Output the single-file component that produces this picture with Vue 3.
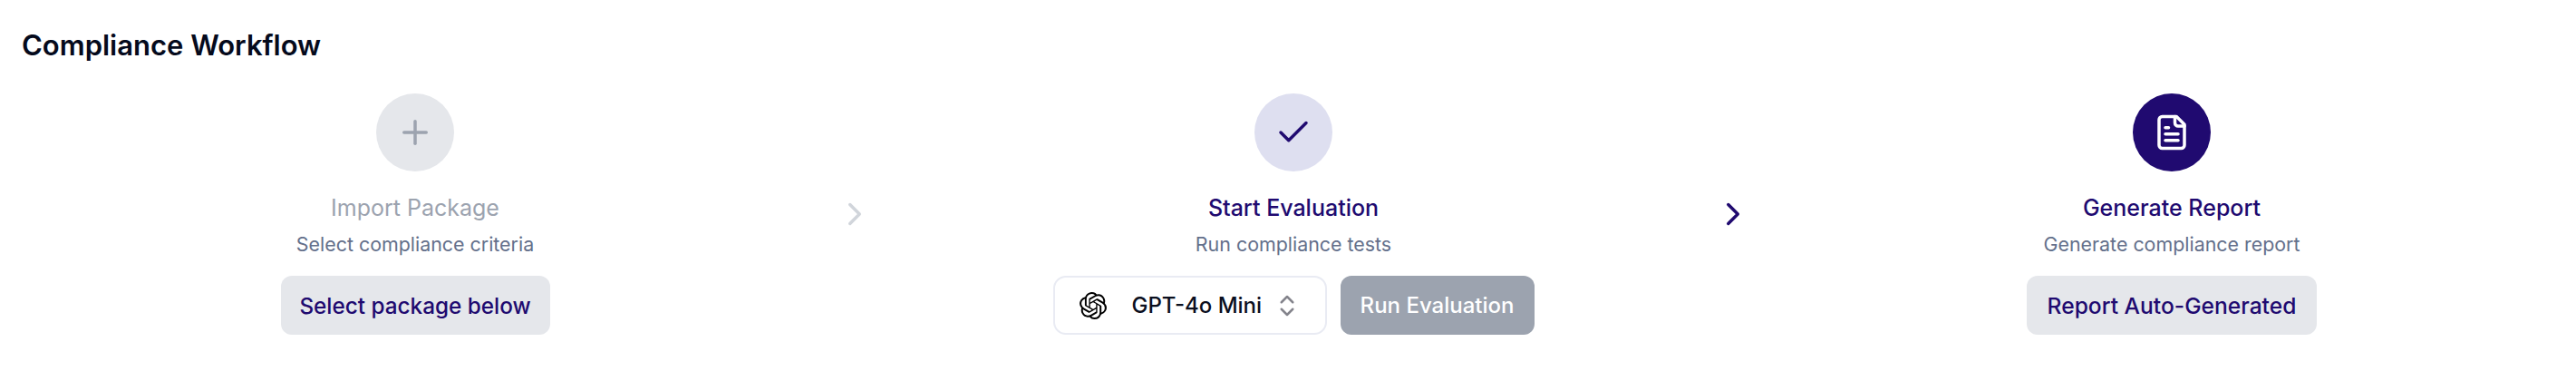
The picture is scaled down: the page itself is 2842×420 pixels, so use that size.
<script setup>
const openai = "M22.2819 9.8211a5.9847 5.9847 0 0 0-.5157-4.9108 6.0462 6.0462 0 0 0-6.5098-2.9A6.0651 6.0651 0 0 0 4.9807 4.1818a5.9847 5.9847 0 0 0-3.9977 2.9 6.0462 6.0462 0 0 0 .7427 7.0966 5.98 5.98 0 0 0 .511 4.9107 6.051 6.051 0 0 0 6.5146 2.9001A5.9847 5.9847 0 0 0 13.2599 24a6.0557 6.0557 0 0 0 5.7718-4.2058 5.9894 5.9894 0 0 0 3.9977-2.9001 6.0557 6.0557 0 0 0-.7475-7.0729zm-9.022 12.6081a4.4755 4.4755 0 0 1-2.8764-1.0408l.1419-.0804 4.7783-2.7582a.7948.7948 0 0 0 .3927-.6813v-6.7369l2.02 1.1686a.071.071 0 0 1 .038.052v5.5826a4.504 4.504 0 0 1-4.4945 4.4944zm-9.6607-4.1254a4.4708 4.4708 0 0 1-.5346-3.0137l.142.0852 4.783 2.7582a.7712.7712 0 0 0 .7806 0l5.8428-3.3685v2.3324a.0804.0804 0 0 1-.0332.0615L9.74 19.9502a4.4992 4.4992 0 0 1-6.1408-1.6464zM2.3408 7.8956a4.485 4.485 0 0 1 2.3655-1.9728V11.6a.7664.7664 0 0 0 .3879.6765l5.8144 3.3543-2.0201 1.1685a.0757.0757 0 0 1-.071 0l-4.8303-2.7865A4.504 4.504 0 0 1 2.3408 7.872zm16.5963 3.8558L13.1038 8.364 15.1192 7.2a.0757.0757 0 0 1 .071 0l4.8303 2.7913a4.4944 4.4944 0 0 1-.6765 8.1042v-5.6772a.79.79 0 0 0-.407-.667zm2.0107-3.0231l-.142-.0852-4.7735-2.7818a.7759.7759 0 0 0-.7854 0L9.409 9.2297V6.8974a.0662.0662 0 0 1 .0284-.0615l4.8303-2.7866a4.4992 4.4992 0 0 1 6.6802 4.66zM8.3065 12.863l-2.02-1.1638a.0804.0804 0 0 1-.038-.0567V6.0742a4.4992 4.4992 0 0 1 7.3757-3.4537l-.142.0805L8.704 5.459a.7948.7948 0 0 0-.3927.6813zm1.0976-2.3654l2.602-1.4998 2.6069 1.4998v2.9994l-2.5974 1.4997-2.6067-1.4997Z";
</script>

<template>
  <div class="page">
    <h2 class="heading">Compliance Workflow</h2>
    <div class="flow">
      <section class="step">
        <div class="circle muted">
          <svg class="ico" viewBox="0 0 24 24"><path d="M5 12h14" /><path d="M12 5v14" /></svg>
        </div>
        <h3 class="title off">Import Package</h3>
        <p class="sub">Select compliance criteria</p>
        <div class="actions"><button class="btn soft select-pkg">Select package below</button></div>
      </section>

      <div class="arrow light">
        <svg class="ico" viewBox="0 0 24 24"><path d="m9 18 6-6-6-6" /></svg>
      </div>

      <section class="step">
        <div class="circle pale">
          <svg class="ico" viewBox="0 0 24 24"><path d="M20 6 9 17l-5-5" /></svg>
        </div>
        <h3 class="title">Start Evaluation</h3>
        <p class="sub">Run compliance tests</p>
        <div class="actions">
          <div class="select">
            <svg class="logo" viewBox="0 0 24 24"><path :d="openai" /></svg>
            <span class="model">GPT-4o Mini</span>
            <svg class="updown" viewBox="0 0 24 24"><path d="m7 15 5 5 5-5" /><path d="m7 9 5-5 5 5" /></svg>
          </div>
          <button class="btn run">Run Evaluation</button>
        </div>
      </section>

      <div class="arrow dark">
        <svg class="ico" viewBox="0 0 24 24"><path d="m9 18 6-6-6-6" /></svg>
      </div>

      <section class="step">
        <div class="circle solid">
          <svg class="ico" viewBox="0 0 24 24">
            <path d="M15 2H6a2 2 0 0 0-2 2v16a2 2 0 0 0 2 2h12a2 2 0 0 0 2-2V7Z" />
            <path d="M14 2v4a2 2 0 0 0 2 2h4" />
            <path d="M10 9H8" /><path d="M16 13H8" /><path d="M16 17H8" />
          </svg>
        </div>
        <h3 class="title">Generate Report</h3>
        <p class="sub">Generate compliance report</p>
        <div class="actions"><button class="btn soft report">Report Auto-Generated</button></div>
      </section>
    </div>
  </div>
</template>

<style scoped>
.page {
  box-sizing: border-box;
  width: 2842px;
  height: 420px;
  padding: 32px 12px 0 24px;
  background: #fff;
  font-family: Inter, "Noto Sans", sans-serif;
}
.heading {
  margin: 0;
  font-size: 31px;
  line-height: 36px;
  font-weight: 600;
  color: #050a1c;
}
.flow {
  display: flex;
  align-items: center;
  margin-top: 35px;
}
.step {
  flex: 1 1 0;
  display: flex;
  flex-direction: column;
  align-items: center;
}
.arrow {
  width: 101px;
  display: flex;
  justify-content: center;
}
.arrow.light { color: #d1d5db; }
.arrow.dark { color: #200a70; }
.circle {
  width: 86px;
  height: 86px;
  border-radius: 50%;
  display: flex;
  align-items: center;
  justify-content: center;
}
.muted { background: #e5e7eb; color: #9ca3af; }
.pale { background: #dedff0; color: #200a70; }
.solid { background: #200a70; color: #fff; }
.ico {
  width: 42px;
  height: 42px;
  fill: none;
  stroke: currentColor;
  stroke-width: 2;
  stroke-linecap: round;
  stroke-linejoin: round;
}
.title {
  margin: 22px 0 0;
  font-size: 25px;
  line-height: 36px;
  font-weight: 500;
  color: #200a70;
}
.title.off { color: #9ca3af; font-weight: 400; }
.sub {
  margin: 6px 0 0;
  font-size: 21.4px;
  line-height: 32px;
  color: #64708b;
}
.actions {
  margin-top: 19px;
  display: flex;
  gap: 15px;
}
.btn {
  width: 214px;
  height: 65px;
  padding: 0;
  border: 0;
  border-radius: 12px;
  font: 500 24px/32px Inter, "Noto Sans", sans-serif;
}
.soft { background: #e5e7eb; color: #200a70; }
.select-pkg { width: 297px; font-size: 24.3px; }
.report { width: 320px; font-size: 24.6px; }
.run { background: #9ca3af; color: #fff; }
.select {
  box-sizing: border-box;
  width: 302px;
  height: 65px;
  padding: 0 27px;
  border: 2px solid #e9ebf3;
  border-radius: 14px;
  display: flex;
  align-items: center;
  background: #fff;
}
.logo { width: 30px; height: 30px; flex: none; fill: #000; }
.model {
  margin-left: 28px;
  font-size: 24px;
  font-weight: 500;
  color: #0b0f1e;
  white-space: nowrap;
}
.updown {
  width: 30px;
  height: 30px;
  margin-left: auto;
  flex: none;
  fill: none;
  stroke: #84848c;
  stroke-width: 2;
  stroke-linecap: round;
  stroke-linejoin: round;
}
</style>
